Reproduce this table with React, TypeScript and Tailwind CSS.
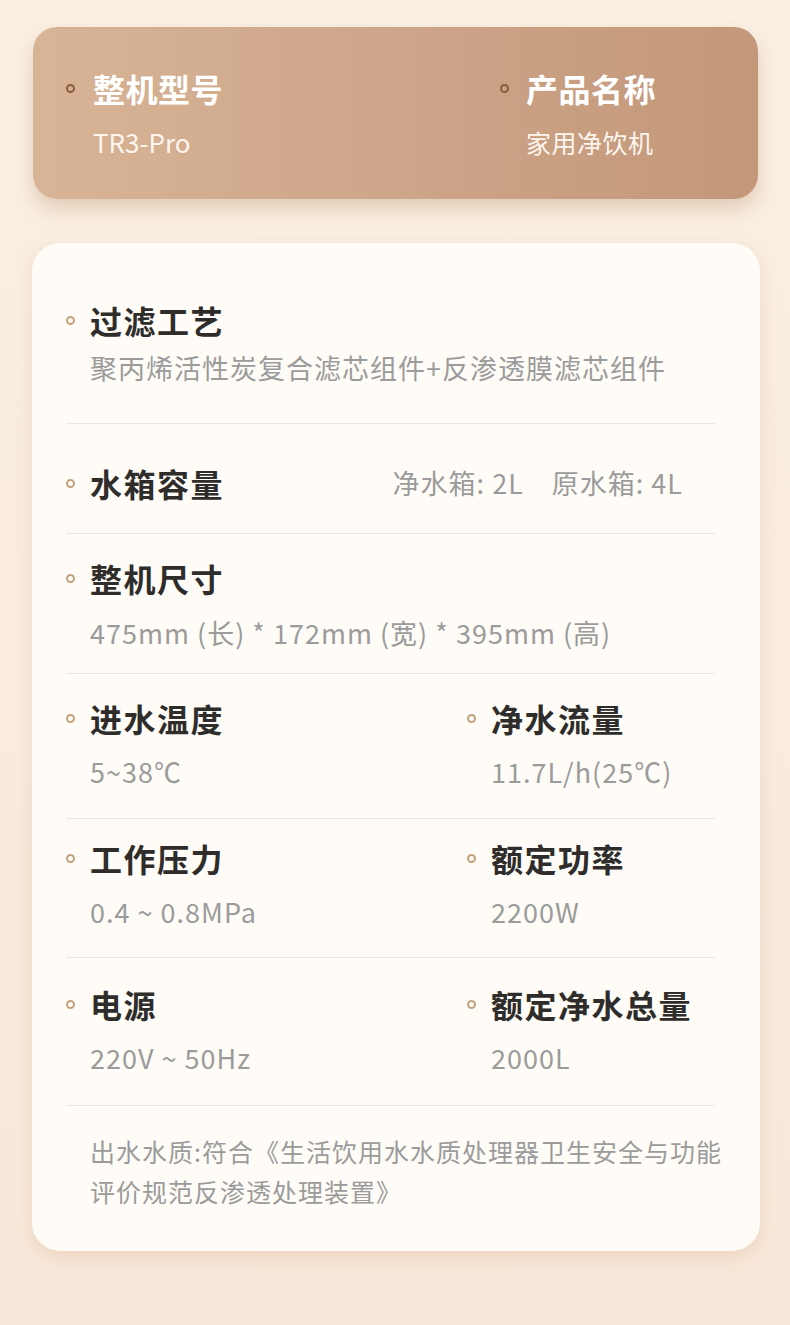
import React from "react";

const font = {
  fontFamily: '"Noto Sans CJK SC", "Noto Sans", sans-serif',
};

const Dot = ({ dark }: { dark?: boolean }) => (
  <span
    className={
      "inline-block w-[9px] h-[9px] rounded-full border-2 shrink-0 " +
      (dark ? "border-[#8a5e3c]" : "border-[#c2a27c]")
    }
  />
);

const Title = ({ children }: { children: React.ReactNode }) => (
  <div className="flex items-center gap-[15px]">
    <Dot />
    <span className="text-[32px] leading-[40px] font-bold tracking-[1.5px] text-[#2f2d2b]">
      {children}
    </span>
  </div>
);

const Value = ({ children }: { children: React.ReactNode }) => (
  <div className="pl-[24px] text-[27px] leading-[36px] tracking-[1px] text-[#9b9b9b]">
    {children}
  </div>
);

const Divider = () => <div className="h-px bg-[#ece7e1]" />;

const Cell = ({ title, value }: { title: string; value: string }) => (
  <div className="flex flex-col gap-[16px]">
    <Title>{title}</Title>
    <Value>{value}</Value>
  </div>
);

const App = () => {
  return (
    <div
      className="w-[790px] min-h-[1325px] bg-gradient-to-b from-[#faefe3] to-[#f8e7d9] pt-[27px] pb-[75px]"
      style={font}
    >
      {/* header card */}
      <div className="mx-[33px] w-[725px] h-[172px] rounded-[24px] bg-gradient-to-r from-[#d8b497] to-[#c3977a] shadow-[0_10px_18px_rgba(170,120,80,0.28)] pl-[33px] pt-[41px] grid grid-cols-[434px_1fr]">
        <div className="flex flex-col gap-[16px]">
          <div className="flex items-center gap-[18px]">
            <Dot dark />
            <span className="text-[32px] leading-[40px] font-bold tracking-[0.5px] text-white">
              整机型号
            </span>
          </div>
          <div className="pl-[27px] text-[26px] leading-[36px] text-[#fdf6ef]">
            TR3-Pro
          </div>
        </div>
        <div className="flex flex-col gap-[16px]">
          <div className="flex items-center gap-[17px]">
            <Dot dark />
            <span className="text-[32px] leading-[40px] font-bold tracking-[0.5px] text-white">
              产品名称
            </span>
          </div>
          <div className="pl-[26px] text-[25px] leading-[36px] tracking-[0.5px] text-[#fdf6ef]">
            家用净饮机
          </div>
        </div>
      </div>

      {/* spec card */}
      <div className="mx-[32px] mt-[44px] w-[728px] rounded-[28px] bg-[#fffcf7] shadow-[0_6px_16px_rgba(190,150,110,0.22)] pl-[34px] pr-[45px] pt-[57px] pb-[40px]">
        <div className="flex flex-col gap-[10px] pb-[37px]">
          <Title>过滤工艺</Title>
          <Value>聚丙烯活性炭复合滤芯组件+反渗透膜滤芯组件</Value>
        </div>
        <Divider />

        <div className="flex items-center justify-between pt-[39px] pb-[30px] pr-[32px]">
          <Title>水箱容量</Title>
          <div className="flex gap-[28px] text-[27px] leading-[40px] tracking-[1px] text-[#9b9b9b]">
            <span>净水箱: 2L</span>
            <span>原水箱: 4L</span>
          </div>
        </div>
        <Divider />

        <div className="flex flex-col gap-[17px] pt-[24px] pb-[22px]">
          <Title>整机尺寸</Title>
          <Value>475mm (长) * 172mm (宽) * 395mm (高)</Value>
        </div>
        <Divider />

        <div className="grid grid-cols-[401px_1fr] pt-[24px] pb-[28px]">
          <Cell title="进水温度" value="5~38℃" />
          <Cell title="净水流量" value="11.7L/h(25℃)" />
        </div>
        <Divider />

        <div className="grid grid-cols-[401px_1fr] pt-[19px] pb-[27px]">
          <Cell title="工作压力" value="0.4 ~ 0.8MPa" />
          <Cell title="额定功率" value="2200W" />
        </div>
        <Divider />

        <div className="grid grid-cols-[401px_1fr] pt-[26px] pb-[29px]">
          <Cell title="电源" value="220V ~ 50Hz" />
          <Cell title="额定净水总量" value="2000L" />
        </div>
        <Divider />

        <p className="pt-[25px] pl-[24px] -mr-[10px] text-[25px] leading-[40px] tracking-[1px] text-[#9b9b9b]">
          出水水质:符合《生活饮用水水质处理器卫生安全与功能评价规范反渗透处理装置》
        </p>
      </div>
    </div>
  );
};

export default App;
